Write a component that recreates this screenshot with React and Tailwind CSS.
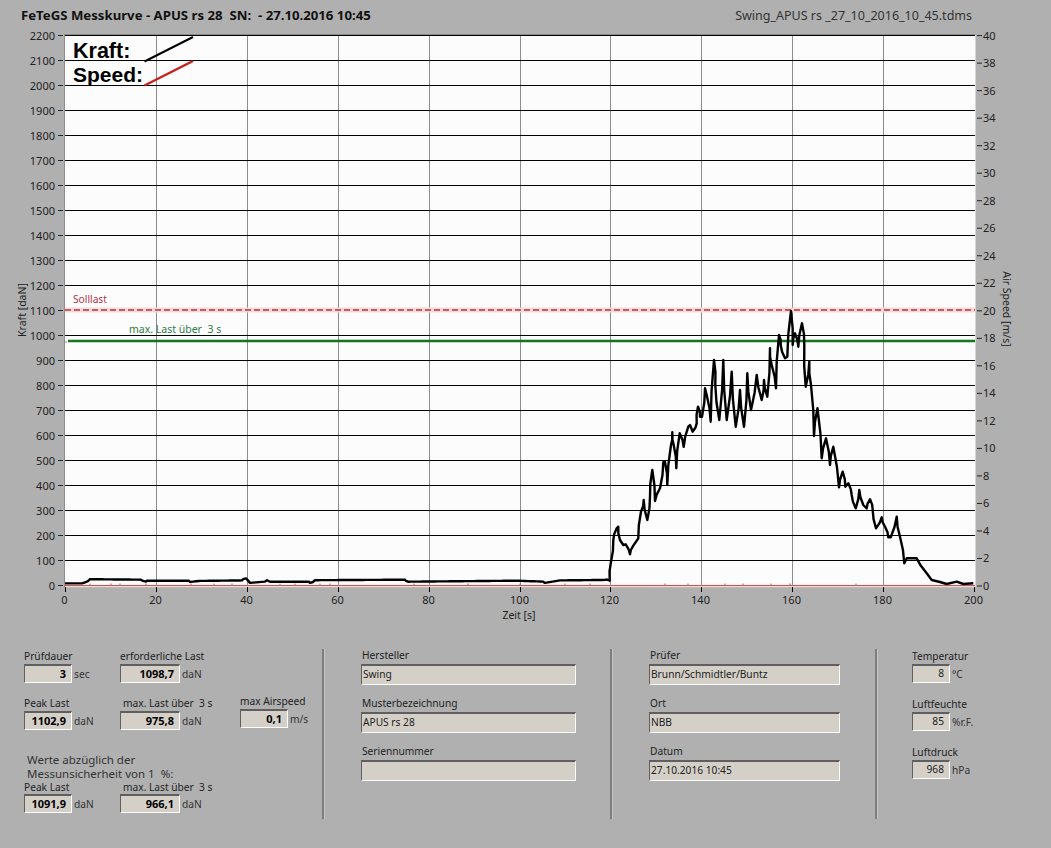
const leftTicks = Array.from({ length: 23 }, (_, i) => i * 100);
const rightTicks = Array.from({ length: 21 }, (_, i) => i * 2);
const gridX = [156.5, 247.5, 338.5, 429.5, 520.5, 610.5, 701.5, 792.5, 883.5];
const xTicks = [65.5, ...gridX, 974.5];

// flat part before the pull starts, a bit of noise like the real signal
const flat = [
  [65, 583], [82, 583], [90, 580], [143, 580.5], [147, 581.5], [190, 581.5], [200, 580.5],
  [243, 580], [247, 579], [250, 582.5], [267, 581], [270, 582.5], [310, 582.5], [315, 581],
  [406, 580.5], [408, 582.5], [516, 581.5], [545, 582.5], [560, 580], [607, 579.5],
];
const noisy = [];
flat.forEach((p, i) => {
  const next = flat[i + 1];
  if (!next) {
    noisy.push(p);
    return;
  }
  for (let x = p[0]; x < next[0]; x += 3) {
    const y = p[1] + ((next[1] - p[1]) * (x - p[0])) / (next[0] - p[0]);
    noisy.push([x, y + ((x * 7) % 3 === 0 ? -0.8 : 0.4)]);
  }
});

const pull = [
  [609.7, 580.7], [611, 561.7], [613.3, 540], [616.7, 528.3], [618.3, 526.7], [620, 540], [623.3, 545],
  [625.7, 544.3], [630, 554.3], [633.3, 545.7], [638.3, 538.3], [641, 511.7], [643.7, 500], [647.3, 520],
  [650, 496.7], [652.3, 470], [655, 501], [660, 488.3], [663.3, 462.3], [665, 462], [667.3, 485],
  [671, 445], [672.3, 432.3], [673.7, 445], [676.3, 468.3], [679.7, 433.3], [683.7, 446.7], [688.3, 426.7],
  [690, 425], [692.7, 431.7], [696.7, 423.3], [698, 406.7], [700, 416.7], [702, 416.7], [705, 388.3],
  [706.7, 395], [710.7, 421.7], [714, 360], [715.3, 385], [719.3, 420], [723.3, 360], [726.7, 420],
  [731.7, 371.7], [735.7, 426.7], [740, 390], [744, 426.7], [747.3, 373.3], [751, 410], [756.7, 375],
  [761.7, 400], [764, 380], [767.3, 396.7], [770, 348.3], [771.7, 365], [776, 388.3], [779, 335],
  [780.7, 345], [785, 358.3], [787.3, 356.7], [791, 311], [792.7, 345], [795, 333.3], [798.3, 346.7],
  [802, 323.3], [804.3, 345], [805.7, 386.7], [809.3, 361.7], [811, 385], [814, 436], [817.5, 408.3],
  [821.7, 458.3], [826, 438.3], [830, 465], [833.3, 446.7], [839, 487.3], [842.7, 471.7], [845.3, 486.7],
  [848.3, 483.3], [851.7, 495], [855.7, 508.3], [859.3, 490], [863.3, 505], [866.7, 508.3], [870, 499.3],
  [872.7, 510], [876, 528.3], [881.7, 517.3], [885, 526.7], [888.3, 537.3], [890.7, 537.3], [896.7, 516.7],
  [900, 536.7], [904.3, 563.3], [906.7, 558.3], [916.7, 558.3], [926.7, 573.3], [931.7, 580], [940, 582],
  [946.7, 584], [956.7, 581.7], [963.3, 584], [973.3, 583.3],
];

// rough up the measured part too, the trace is never a clean straight line
const rough = [];
pull.forEach((p, i) => {
  rough.push(p);
  const next = pull[i + 1];
  if (next && Math.abs(next[1] - p[1]) > 8) {
    const mx = (p[0] + next[0]) / 2 + (i % 2 ? 0.8 : -0.8);
    rough.push([mx, (p[1] + next[1]) / 2]);
  }
});

const curvePoints = [...noisy, ...rough].map((p) => p.join(",")).join(" ");

const redDots = [90, 111, 120, 146, 191, 214, 232, 280, 295, 320, 330, 414, 468, 520, 565, 590, 665, 688, 725, 743, 771, 790, 856];

const Chart = () => (
  <svg className="block" width="1051" height="622" viewBox="0 26 1051 622" fill="none">
    {/* plot background */}
    <rect x="64" y="34.5" width="911.5" height="552.5" fill="#fcfcfc" />
    <path d="M64 34.5H975.5M64.5 34.5V587" stroke="#8c8c8c" />

    {gridX.map((x) => (
      <path key={x} d={`M${x} 35V586`} stroke="#8c8c8c" />
    ))}
    {leftTicks.slice(1).map((v) => (
      <path key={v} d={`M65 ${585.5 - v / 4}H975`} stroke="#000" />
    ))}

    {/* Solllast + max. Last */}
    <path d="M65 310H975" stroke="#f7d8d8" strokeWidth="5" />
    <path d="M65 310H975" stroke="#a93a45" strokeWidth="1.5" strokeDasharray="6 3" />
    <path d="M68 341H975" stroke="#11761f" strokeWidth="2.5" />
    <path d="M65 342H67" stroke="#6aa86f" strokeWidth="1" />

    {/* speed sits on the zero line */}
    <path d="M65 586H975" stroke="#f6d4d4" strokeWidth="2.5" />
    <path d="M65 585.5H975" stroke="#c25a5e" />
    {redDots.map((x) => (
      <path key={x} d={`M${x} 585V583.5`} stroke="#c25a5e" />
    ))}

    <polyline points={curvePoints} stroke="#000" strokeWidth="2.4" strokeLinejoin="round" />

    {/* legend */}
    <path d="M144.5 61.5L193 37" stroke="#000" strokeWidth="2" />
    <path d="M144.5 85.5L193 61" stroke="#c6201f" strokeWidth="2.4" />
    <text x="73" y="58" fill="#000" className="font-['Liberation_Sans',sans-serif] text-[21.5px] font-bold">Kraft:</text>
    <text x="73" y="82" fill="#000" className="font-['Liberation_Sans',sans-serif] text-[21px] font-bold">Speed:</text>
    <text x="73" y="303" fill="#b3334c" className="text-[10.2px]">Solllast</text>
    <text x="129" y="333" fill="#2f7a45" className="text-[10.5px]" xmlSpace="preserve">max. Last über  3 s</text>

    {/* left axis */}
    {leftTicks.map((v) => (
      <g key={v}>
        <path d={`M58 ${585.5 - v / 4}H63`} stroke="#222" />
        <text x="55" y={589.5 - v / 4} textAnchor="end" fill="#222" className="text-[11px]">{v}</text>
      </g>
    ))}
    <text transform="translate(26 310) rotate(-90)" textAnchor="middle" fill="#222" className="text-[10.5px]">Kraft [daN]</text>

    {/* right axis */}
    {rightTicks.map((v) => (
      <g key={v}>
        <path d={`M977 ${586 - v * 13.76}H982`} stroke="#222" />
        <text x="983" y={590 - v * 13.76} fill="#222" className="text-[11px]">{v}</text>
      </g>
    ))}
    <text transform="translate(1003 309) rotate(90)" textAnchor="middle" fill="#222" className="text-[10.5px]">Air Speed [m/s]</text>

    {/* time axis */}
    {xTicks.map((x, i) => (
      <g key={x}>
        <path d={`M${x} 587V592`} stroke="#000" />
        <text x={x - 1} y="604" textAnchor="middle" fill="#222" className="text-[11px]">{i * 20}</text>
      </g>
    ))}
    <text x="519" y="619" textAnchor="middle" fill="#222" className="text-[10.5px]">Zeit [s]</text>
  </svg>
);

const Box = ({ w, children, bold, tall }) => (
  <div
    className={`${w} ${tall ? "h-[21px] pl-px justify-start" : "h-[19px] pr-[5px] justify-end"} ${
      bold ? "font-bold text-black text-[11px]" : "text-[#222]"
    } flex items-center bg-[#d4d0c8] border-t-2 border-l border-r border-b border-t-[#5f5f5f] border-l-[#5f5f5f] border-r-white border-b-white whitespace-pre`}
  >
    {children}
  </div>
);

const Field = ({ label, value, unit, w, bold, labelClass = "h-4 leading-4" }) => (
  <div>
    <div className={`text-[#222] whitespace-pre ${labelClass}`}>{label}</div>
    <div className="flex items-center gap-[2px]">
      <Box w={w} bold={bold}>{value}</Box>
      {unit && <span className="mt-[2px] text-[#333]">{unit}</span>}
    </div>
  </div>
);

const TextField = ({ label, value }) => (
  <div className="mb-[11px]">
    <div className="h-4 leading-[14px] pl-px text-[#222]">{label}</div>
    <Box w="w-full" tall>{value}</Box>
  </div>
);

const Divider = () => (
  <div className="w-[3px] h-[170px] mt-px border-l-2 border-l-[#7d7d7d] border-r border-r-[#c6c6c6]" />
);

export default function App() {
  return (
    <div className="w-[1051px] h-[848px] overflow-hidden bg-[#b0b0b0] text-[10.2px] font-['Noto_Sans',sans-serif]">
      {/* header */}
      <div className="h-[26px] pt-[6px] pl-[21px] pr-[79px] flex items-center justify-between">
        <span className="text-[13.2px] font-bold text-[#111] whitespace-pre">
          FeTeGS Messkurve - APUS rs 28  SN:  - 27.10.2016 10:45
        </span>
        <span className="text-[12.5px] text-[#333]">Swing_APUS rs _27_10_2016_10_45.tdms</span>
      </div>

      <Chart />

      {/* values */}
      <div className="flex items-start pl-[24px]">
        <div className="w-[298px]">
          <div className="flex">
            <div className="w-[96px]"><Field label="Prüfdauer" value="3" unit="sec" w="w-[48px]" bold /></div>
            <Field label="erforderliche Last" value="1098,7" unit="daN" w="w-[60px]" bold />
          </div>
          <div className="flex mt-[12px]">
            <div className="w-[96px]"><Field label="Peak Last" value="1102,9" unit="daN" w="w-[48px]" bold /></div>
            <div className="w-[120px]"><Field label="max. Last über  3 s" value="975,8" unit="daN" w="w-[60px]" bold labelClass="h-4 leading-4 pl-[3px]" /></div>
            <div className="-mt-[2px]"><Field label="max Airspeed" value="0,1" unit="m/s" w="w-[48px]" bold /></div>
          </div>
          <div className="mt-[23px] pl-[3px] text-[11.5px] leading-[14px] text-[#333] whitespace-pre">
            <div>Werte abzüglich der</div>
            <div>Messunsicherheit von 1  %:</div>
          </div>
          <div className="flex">
            <div className="w-[96px]"><Field label="Peak Last" value="1091,9" unit="daN" w="w-[48px]" bold labelClass="h-3 mb-px leading-3" /></div>
            <Field label="max. Last über  3 s" value="966,1" unit="daN" w="w-[60px]" bold labelClass="h-3 mb-px leading-3 pl-[3px]" />
          </div>
        </div>
        <Divider />
        <div className="w-[215px] ml-[36px]">
          <TextField label="Hersteller" value="Swing" />
          <TextField label="Musterbezeichnung" value="APUS rs 28" />
          <TextField label="Seriennummer" value="" />
        </div>
        <div className="ml-[34px]"><Divider /></div>
        <div className="w-[191px] ml-[36px]">
          <TextField label="Prüfer" value="Brunn/Schmidtler/Buntz" />
          <TextField label="Ort" value="NBB" />
          <TextField label="Datum" value="27.10.2016 10:45" />
        </div>
        <div className="ml-[35px]"><Divider /></div>
        <div className="ml-[34px] flex flex-col gap-[13px]">
          <Field label="Temperatur" value="8" unit="°C" w="w-[38px]" />
          <Field label="Luftfeuchte" value="85" unit="%r.F." w="w-[38px]" />
          <Field label="Luftdruck" value="968" unit="hPa" w="w-[38px]" />
        </div>
      </div>
    </div>
  );
}
